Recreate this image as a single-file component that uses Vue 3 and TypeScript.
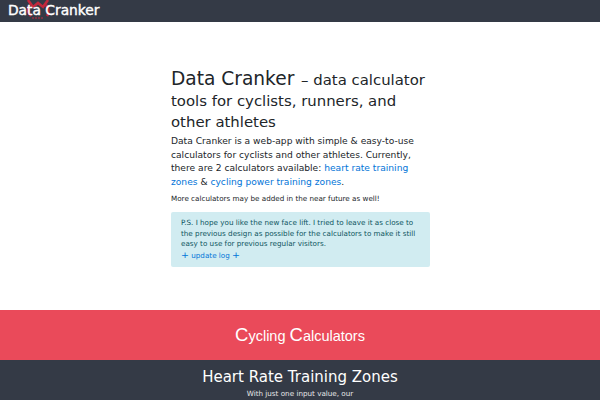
<script setup lang="ts">
const title = 'Data Cranker'
</script>

<template>
  <div class="page">
    <header class="nav">
      <a class="brand">
        <svg class="gear" width="32" height="22" viewBox="0 0 32 22" aria-hidden="true">
          <g fill="none" stroke="#c2283c" stroke-width="2.6">
            <path d="M6 0 L11 7 L16 3 L21 7 L26 0" />
            <path d="M7 6 A 9 9 0 0 0 9 16" />
            <path d="M24 5 A 9 9 0 0 1 25 16" />
            <path d="M10 18h12" stroke-dasharray="2 1" stroke-width="1.2" />
          </g>
        </svg>
        <span class="brand-text">{{ title }}</span>
      </a>
    </header>
    <main class="intro">
      <h1><span class="big">Data Cranker</span> – data calculator tools for cyclists, runners, and other athletes</h1>
      <p class="lead">Data Cranker is a web-app with simple &amp; easy-to-use calculators for cyclists and other athletes. Currently, there are 2 calculators available: <a>heart rate training zones</a> &amp; <a>cycling power training zones</a>.</p>
      <p class="small">More calculators may be added in the near future as well!</p>
      <div class="alert">
        P.S. I hope you like the new face lift. I tried to leave it as close to the previous design as possible for the calculators to make it still easy to use for previous regular visitors.
        <div><a><b>+</b> update log <b>+</b></a></div>
      </div>
    </main>
    <section class="band">
      <h2><span>C</span>ycling <span>C</span>alculators</h2>
    </section>
    <section class="dark">
      <h3>Heart Rate Training Zones</h3>
      <p>With just one input value, our</p>
    </section>
  </div>
</template>

<style>
html, body { margin: 0; overflow: hidden; background: #fff; }
</style>

<style scoped>
.page { width: 600px; height: 400px; overflow: hidden; font-family: "DejaVu Sans", sans-serif; color: #212529; }
.nav { height: 22px; background: #343a46; display: flex; align-items: center; }
.brand { position: relative; margin-left: 8px; display: block; height: 22px; }
.gear { position: absolute; left: 14px; top: 0; }
.brand-text { position: relative; font-size: 13.8px; line-height: 20px; color: #fff; -webkit-text-stroke: 0.4px #fff; }
.intro { width: 259px; margin: 46px auto 0 171px; }
h1 { margin: 0; font-size: 14.9px; font-weight: 400; line-height: 21px; }
.big { font-size: 18.6px; margin-right: 2px; }
.lead { margin: 2px 0 0; font-size: 9.15px; line-height: 13.5px; }
.lead a, .alert a { color: #0275d8; }
.small { margin: 4px 0 0; font-size: 7.2px; line-height: 12px; }
.alert { box-sizing: border-box; margin-top: 7px; padding: 6px 10px 4px; background: #d1ecf1; color: #0c5460; border-radius: 2px; font-size: 7.2px; line-height: 10.7px; height: 55px; }
.alert b { font-weight: 400; font-size: 9.5px; line-height: 1; }
.band { margin-top: 43px; height: 50px; background: #ea4a5a; display: flex; align-items: center; justify-content: center; }
h2 { margin: 0; font-family: "Liberation Sans", sans-serif; font-size: 14.5px; font-weight: 400; color: #fff; }
h2 span { font-size: 18.5px; }
.dark { height: 40px; background: #343a46; color: #fff; text-align: center; }
h3 { margin: 0; padding-top: 8px; font-size: 15px; font-weight: 400; line-height: 18px; }
.dark p { margin: 3px 0 0; font-size: 7.2px; line-height: 10px; color: #e6e6e6; }
</style>
